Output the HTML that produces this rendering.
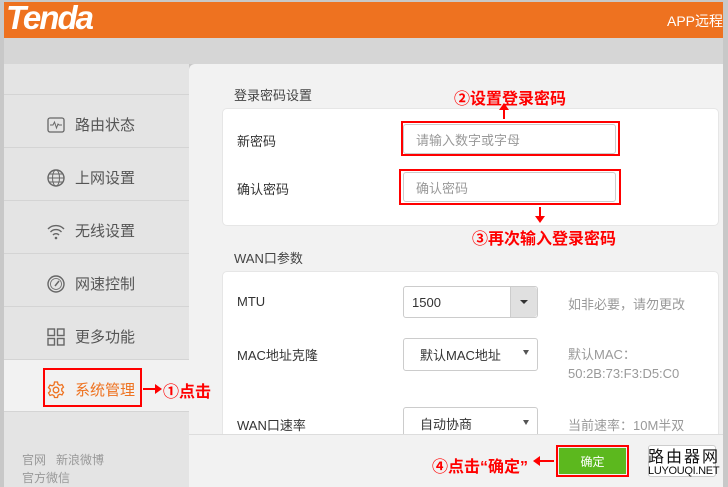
<!DOCTYPE html>
<html><head><meta charset="utf-8"><style>
*{margin:0;padding:0;box-sizing:border-box}
body{width:728px;height:487px;overflow:hidden;background:#fff;font-family:"Liberation Sans","Noto Sans CJK SC",sans-serif;position:relative}
.a{position:absolute}
.hdr{left:4px;top:2px;width:719px;height:36px;background:#ee7220}
.band{left:4px;top:38px;width:719px;height:26px;background:#d6d6d6}
.side{left:4px;top:64px;width:185px;height:423px;background:#e4e4e4}
.main{left:189px;top:64px;width:534px;height:423px;background:#f2f2f2;border-radius:6px 0 0 0}
.sep{left:4px;width:185px;height:1px;background:#d4d4d4}
.it{left:47px;font-size:15px;color:#555;display:flex;align-items:center}
.it svg{margin-right:10px}
.card{background:#fff;border-radius:5px;border:1px solid #e6e6e6}
.lbl{font-size:13px;color:#333}
.inp{background:#fff;border:1px solid #ccc;border-radius:3px;font-size:13px;color:#999;padding-left:12px;display:flex;align-items:center}
.red{color:#f00;font-weight:bold;font-size:16px}
.hint{font-size:13px;color:#999}
</style></head><body>
<div class="a" style="left:0;top:0;width:728px;height:487px;background:#c8c8c8"></div>
<div class="a hdr"></div>
<div class="a" style="left:6px;top:-1px;font-size:33px;font-weight:bold;font-style:italic;color:#fff;letter-spacing:-2px">Tenda</div>
<div class="a" style="left:667px;top:11px;font-size:14px;color:#fff">APP远程</div>
<div class="a band"></div>
<div class="a side"></div>
<div class="a main"></div>
<div class="a sep" style="top:94px"></div>
<div class="a sep" style="top:147px"></div>
<div class="a sep" style="top:200px"></div>
<div class="a sep" style="top:253px"></div>
<div class="a sep" style="top:306px"></div>
<div class="a" style="left:4px;top:359px;width:185px;height:53px;background:#f2f2f2;border-top:1px solid #d4d4d4;border-bottom:1px solid #d4d4d4"></div>
<div class="a it" style="top:114px"><svg width="18" height="18" viewBox="0 0 18 18"><rect x="1" y="2" width="16" height="14" rx="2" fill="none" stroke="#666" stroke-width="1.3"/><path d="M3 9h3l1.5-3 2 6 1.5-4 1 1h3" fill="none" stroke="#666" stroke-width="1"/></svg>路由状态</div>
<div class="a it" style="top:167px"><svg width="18" height="18" viewBox="0 0 18 18"><circle cx="9" cy="9" r="8" fill="none" stroke="#666" stroke-width="1.4"/><ellipse cx="9" cy="9" rx="3.5" ry="8" fill="none" stroke="#666"/><path d="M1 9h16M2.5 5h13M2.5 13h13" stroke="#666"/></svg>上网设置</div>
<div class="a it" style="top:220px"><svg width="18" height="18" viewBox="0 0 18 18"><path d="M1 7a11 11 0 0 1 16 0M3.5 10a7.5 7.5 0 0 1 11 0M6 13a4 4 0 0 1 6 0" fill="none" stroke="#666" stroke-width="1.4"/><circle cx="9" cy="16" r="1.3" fill="#666"/></svg>无线设置</div>
<div class="a it" style="top:273px"><svg width="18" height="18" viewBox="0 0 18 18"><circle cx="9" cy="9" r="8" fill="none" stroke="#666" stroke-width="1.4"/><circle cx="9" cy="9" r="5.5" fill="none" stroke="#666" stroke-width=".8"/><path d="M8 11l4-5" stroke="#666" stroke-width="1.5"/></svg>网速控制</div>
<div class="a it" style="top:326px"><svg width="18" height="18" viewBox="0 0 18 18"><g fill="none" stroke="#666" stroke-width="1.4"><rect x="1" y="1" width="6.5" height="6.5"/><rect x="10.5" y="1" width="6.5" height="6.5"/><rect x="1" y="10.5" width="6.5" height="6.5"/><rect x="10.5" y="10.5" width="6.5" height="6.5"/></g></svg>更多功能</div>
<div class="a it" style="top:379px;color:#ee7220"><svg width="18" height="18" viewBox="0 0 18 18"><g fill="none" stroke="#ee7220" stroke-width="1.3"><circle cx="9" cy="9" r="2.8"/><path d="M7.5 1h3l.5 2.3 1.8 1 2.2-.8 1.5 2.6-1.7 1.6v2.1l1.7 1.6-1.5 2.6-2.2-.8-1.8 1-.5 2.300h-3L7 14.7l-1.8-1-2.2.8-1.5-2.6L3.2 10.3V8.2L1.5 6.6 3 4l2.2.8 1.8-1z"/></g></svg>系统管理</div>
<div class="a" style="left:43px;top:368px;width:99px;height:39px;border:2px solid #f00"></div>
<div class="a" style="left:143px;top:388px;width:16px;height:2px;background:#f00"></div>
<div class="a" style="left:155px;top:384px;border-left:7px solid #f00;border-top:5px solid transparent;border-bottom:5px solid transparent"></div>
<div class="a red" style="left:163px;top:378px">①点击</div>
<div class="a" style="left:22px;top:451px;font-size:12px;color:#999">官网&nbsp;&nbsp;&nbsp;新浪微博</div>
<div class="a" style="left:22px;top:469px;font-size:12px;color:#999">官方微信</div>

<div class="a" style="left:234px;top:85px;font-size:13px;color:#444">登录密码设置</div>
<div class="a card" style="left:222px;top:108px;width:497px;height:118px"></div>
<div class="a lbl" style="left:237px;top:131px">新密码</div>
<div class="a lbl" style="left:237px;top:179px">确认密码</div>
<div class="a inp" style="left:403px;top:124px;width:213px;height:30px">请输入数字或字母</div>
<div class="a inp" style="left:403px;top:172px;width:213px;height:30px">确认密码</div>
<div class="a" style="left:401px;top:121px;width:219px;height:35px;border:2px solid #f00"></div>
<div class="a" style="left:399px;top:169px;width:222px;height:36px;border:2px solid #f00"></div>
<div class="a red" style="left:454px;top:85px">②设置登录密码</div>
<div class="a" style="left:503px;top:106px;width:2px;height:13px;background:#f00"></div>
<div class="a" style="left:499px;top:103px;border-bottom:7px solid #f00;border-left:5px solid transparent;border-right:5px solid transparent"></div>
<div class="a red" style="left:472px;top:225px">③再次输入登录密码</div>
<div class="a" style="left:539px;top:207px;width:2px;height:10px;background:#f00"></div>
<div class="a" style="left:535px;top:216px;border-top:7px solid #f00;border-left:5px solid transparent;border-right:5px solid transparent"></div>

<div class="a" style="left:234px;top:248px;font-size:13px;color:#444">WAN口参数</div>
<div class="a card" style="left:222px;top:271px;width:497px;height:180px"></div>
<div class="a lbl" style="left:237px;top:294px">MTU</div>
<div class="a lbl" style="left:237px;top:345px">MAC地址克隆</div>
<div class="a lbl" style="left:237px;top:415px">WAN口速率</div>
<div class="a inp" style="left:403px;top:286px;width:135px;height:32px;color:#333;padding-left:8px">1500</div>
<div class="a" style="left:510px;top:287px;width:27px;height:30px;background:#e0e0e0;border-left:1px solid #ccc;border-radius:0 3px 3px 0"></div>
<div class="a" style="left:520px;top:300px;border-top:4px solid #333;border-left:4px solid transparent;border-right:4px solid transparent"></div>
<div class="a inp" style="left:403px;top:338px;width:135px;height:33px;color:#333;padding-left:16px">默认MAC地址</div>
<div class="a" style="left:523px;top:350px;border-top:5px solid #555;border-left:3px solid transparent;border-right:3px solid transparent"></div>
<div class="a inp" style="left:403px;top:407px;width:135px;height:33px;color:#333;padding-left:16px">自动协商</div>
<div class="a" style="left:523px;top:420px;border-top:5px solid #555;border-left:3px solid transparent;border-right:3px solid transparent"></div>
<div class="a hint" style="left:568px;top:294px">如非必要，请勿更改</div>
<div class="a hint" style="left:568px;top:345px;line-height:19px">默认MAC：<br>50:2B:73:F3:D5:C0</div>
<div class="a hint" style="left:568px;top:415px">当前速率：10M半双</div>

<div class="a" style="left:189px;top:434px;width:534px;height:53px;background:#f2f2f2;border-top:1px solid #ddd"></div>
<div class="a" style="left:556px;top:445px;width:73px;height:32px;border:2px solid #f00"></div>
<div class="a" style="left:559px;top:448px;width:67px;height:26px;background:#5cb81e;color:#fff;font-size:12px;display:flex;align-items:center;justify-content:center">确定</div>
<div class="a red" style="left:432px;top:453px">④点击“确定”</div>
<div class="a" style="left:538px;top:460px;width:16px;height:2px;background:#f00"></div>
<div class="a" style="left:533px;top:456px;border-right:7px solid #f00;border-top:5px solid transparent;border-bottom:5px solid transparent"></div>
<div class="a" style="left:648px;top:445px;width:68px;height:32px;background:#fff;border:1px solid #ccc;border-radius:3px"></div>
<div class="a" style="left:648px;top:443px;font-size:16px;color:#111;letter-spacing:2px">路由器网</div>
<div class="a" style="left:648px;top:465px;font-size:11px;color:#111;letter-spacing:-0.3px">LUYOUQI.NET</div>
</body></html>
